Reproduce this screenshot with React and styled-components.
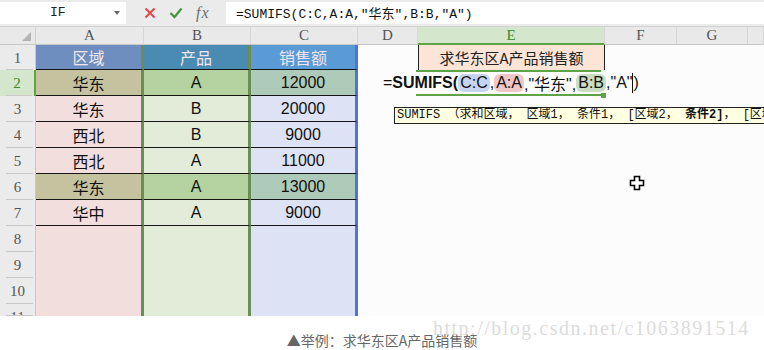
import React from "react";
import styled, { createGlobalStyle } from "styled-components";

const GlobalStyle = createGlobalStyle`
  html, body {
    margin: 0;
    padding: 0;
    background: #ffffff;
  }
  body {
    font-family: "Liberation Sans", "Noto Sans CJK SC", sans-serif;
  }
`;

const columns = [
  { key: "A", edge: "#6b8c55", head: "#6d8ebf", hi: "#c5c39f", lo: "#f2dedd" },
  { key: "B", edge: "#6b8c55", head: "#4a8bb3", hi: "#b4d3a0", lo: "#e2ecd9" },
  { key: "C", edge: "#4f74d4", head: "#5b9bd5", hi: "#aecab8", lo: "#dde3f5" },
];

const heads = ["区域", "产品", "销售额"];

const records = [
  { cells: ["华东", "A", "12000"], hit: true },
  { cells: ["华东", "B", "20000"] },
  { cells: ["西北", "B", "9000"] },
  { cells: ["西北", "A", "11000"] },
  { cells: ["华东", "A", "13000"], hit: true },
  { cells: ["华中", "A", "9000"] },
];

const Page = styled.div`
  width: 764px;
  height: 350px;
  overflow: hidden;
  display: flex;
  flex-direction: column;
  background: #ffffff;
`;

const FormulaBar = styled.div`
  height: 27px;
  box-sizing: border-box;
  display: flex;
  align-items: center;
  padding: 2px 0 3px;
  background: #ebebeb;
  border-bottom: 1px solid #d2d2d2;
`;

const NameBox = styled.div`
  width: 126px;
  height: 22px;
  box-sizing: border-box;
  display: flex;
  align-items: center;
  padding-left: 50px;
  background: #ffffff;
  font-family: "Liberation Mono", monospace;
  font-size: 13px;
  color: #222;
`;

const DropArrow = styled.span`
  margin-left: auto;
  margin-right: 6px;
  width: 0;
  height: 0;
  border-left: 3px solid transparent;
  border-right: 3px solid transparent;
  border-top: 4px solid #666;
`;

const Actions = styled.div`
  width: 100px;
  height: 22px;
  display: flex;
  align-items: center;
  padding-left: 18px;
  gap: 13px;
  box-sizing: border-box;
`;

const Fx = styled.span`
  font-family: "Liberation Serif", serif;
  font-style: italic;
  font-size: 16px;
  color: #6e6e6e;
  letter-spacing: 1px;
`;

const FormulaInput = styled.div`
  flex: 1;
  height: 22px;
  display: flex;
  align-items: center;
  padding-left: 10px;
  background: #ffffff;
  font-family: "Liberation Mono", "Noto Sans CJK SC", monospace;
  font-size: 13px;
  color: #111;
  white-space: nowrap;
`;

const Sheet = styled.div`
  position: relative;
  display: grid;
  grid-template-columns: 36px 108px 107px 107px 60px 187px 72px 71px 1fr;
  grid-template-rows: 18px 25px repeat(9, 26px) 12px;
  height: 289px;
  overflow: hidden;
  background: #fcfcfc;
`;

const Corner = styled.div`
  position: relative;
  background: #e9e9e9;
  border-bottom: 1px solid #c8c8c8;
  border-right: 1px solid #d0d0d0;
  &::after {
    content: "";
    position: absolute;
    right: 4px;
    bottom: 3px;
    border-left: 9px solid transparent;
    border-bottom: 9px solid #b4b4b4;
  }
`;

const ColHead = styled.div`
  display: flex;
  align-items: center;
  justify-content: center;
  box-sizing: border-box;
  background: ${(p) => (p.$active ? "#d4e6cc" : "#e9e9e9")};
  border-bottom: ${(p) => (p.$active ? "2px solid #5ea345" : "1px solid #c8c8c8")};
  border-right: 1px solid #d6d6d6;
  font-family: "Liberation Serif", serif;
  font-size: 15px;
  color: ${(p) => (p.$active ? "#3d8a2c" : "#555")};
`;

const RowHead = styled.div`
  position: relative;
  box-sizing: border-box;
  padding-top: 4px;
  text-align: center;
  line-height: 18px;
  background: ${(p) => (p.$active ? "#d4e6cc" : "#ebebeb")};
  border-right: ${(p) => (p.$active ? "2px solid #5ea345" : "1px solid #c8c8c8")};
  font-family: "Liberation Serif", serif;
  font-size: 15px;
  color: ${(p) => (p.$active ? "#3d8a2c" : "#555")};
  &::after {
    content: "";
    position: absolute;
    left: 6px;
    right: 2px;
    bottom: 0;
    height: 1px;
    background: #c9c9c9;
  }
`;

const DataCell = styled.div`
  position: relative;
  display: flex;
  align-items: center;
  justify-content: center;
  box-sizing: border-box;
  background: ${(p) => p.$bg};
  border-right: 3px solid ${(p) => p.$edge};
  border-bottom: ${(p) => (p.$ruled ? "1.5px solid #151515" : "none")};
  font-size: 16px;
  color: ${(p) => (p.$light ? "#f3e6ee" : "#111")};
`;

const TitleCell = styled.div`
  display: flex;
  align-items: center;
  justify-content: center;
  background: #fce4d6;
  border-left: 1px solid #222;
  border-right: 1px solid #222;
  font-family: "Noto Sans CJK SC", sans-serif;
  font-size: 15px;
  color: #222;
`;

const Blank = styled.div``;

const EditCell = styled.div`
  position: relative;
  z-index: 3;
`;

const ActiveCell = styled.div`
  position: relative;
  box-sizing: border-box;
  border-top: 2px solid #5ea345;
  border-bottom: 2px solid #5ea345;
  margin-left: -2px;
  margin-right: 4px;
  &::after {
    content: "";
    position: absolute;
    right: -5px;
    bottom: -4px;
    width: 5px;
    height: 5px;
    background: #5ea345;
  }
`;

const Editor = styled.div`
  position: absolute;
  left: 25px;
  top: 0;
  height: 26px;
  display: flex;
  align-items: center;
  white-space: nowrap;
  font-size: 16px;
  color: #111;
`;

const Fn = styled.b`
  font-weight: 700;
`;

const Ref = styled.span`
  background: ${(p) => p.$tint};
  border-radius: 6px;
  padding: 0 2px;
  line-height: 18px;
`;

const Caret = styled.span`
  display: inline-block;
  width: 1px;
  height: 20px;
  background: #111;
`;

const Tip = styled.div`
  position: absolute;
  left: 36px;
  top: 37px;
  height: 17px;
  box-sizing: border-box;
  padding: 0 2px;
  white-space: pre;
  background: #ffffe1;
  border: 1px solid #222;
  font-family: "Liberation Mono", "Noto Sans CJK SC", monospace;
  font-size: 12px;
  line-height: 15px;
  color: #111;
`;

const Pointer = styled.svg`
  position: absolute;
  left: 629px;
  top: 148px;
`;

const Footer = styled.div`
  position: relative;
  flex: 1;
  padding-top: 14px;
  text-align: center;
  font-family: "Noto Sans CJK SC", sans-serif;
  font-size: 14px;
  line-height: 20px;
  color: #666;
`;

const Watermark = styled.div`
  position: absolute;
  left: 433px;
  top: 2px;
  font-family: "Liberation Serif", serif;
  font-size: 20px;
  line-height: 20px;
  letter-spacing: 1.5px;
  color: rgba(190, 190, 190, 0.55);
  white-space: nowrap;
`;

function CrossIcon() {
  return (
    <svg width="12" height="12" viewBox="0 0 12 12">
      <path d="M1.5 1.5 L10.5 10.5 M10.5 1.5 L1.5 10.5" stroke="#e0474c" strokeWidth="2" />
    </svg>
  );
}

function CheckIcon() {
  return (
    <svg width="14" height="12" viewBox="0 0 14 12">
      <path d="M1.5 6 L5.5 10 L12.5 1.5" stroke="#3f9a3c" strokeWidth="2.2" fill="none" />
    </svg>
  );
}

function CellPointer() {
  return (
    <Pointer width="16" height="16" viewBox="0 0 16 16">
      <path
        d="M5.5 1.5 H10.5 V5.5 H14.5 V10.5 H10.5 V14.5 H5.5 V10.5 H1.5 V5.5 H5.5 Z"
        fill="#fff"
        stroke="#000"
        strokeWidth="1.6"
      />
    </Pointer>
  );
}

function RightCells({ row }) {
  if (row === 1) {
    return (
      <>
        <Blank />
        <TitleCell>求华东区A产品销售额</TitleCell>
        <Blank />
        <Blank />
        <Blank />
      </>
    );
  }
  if (row === 2) {
    return (
      <>
        <EditCell>
          <Editor>
            =<Fn>SUMIFS(</Fn>
            <Ref $tint="#c6d4ef">C:C</Ref>,<Ref $tint="#f1c6c6">A:A</Ref>,"华东",
            <Ref $tint="#cadcc1">B:B</Ref>,"A"<Caret />)
          </Editor>
          <Tip>
            {"SUMIFS （求和区域， 区域1， 条件1， [区域2， "}
            <b>条件2]</b>
            {"， [区域3， 条件3]， ...）"}
          </Tip>
        </EditCell>
        <ActiveCell />
        <Blank />
        <Blank />
        <Blank />
      </>
    );
  }
  return (
    <>
      <Blank />
      <Blank />
      <Blank />
      <Blank />
      <Blank />
    </>
  );
}

function App() {
  const rows = [];
  for (let r = 1; r <= 11; r++) {
    const rec = records[r - 2];
    rows.push(
      <React.Fragment key={r}>
        <RowHead $active={r === 2}>{r}</RowHead>
        {columns.map((c, i) => {
          if (r === 1) {
            return (
              <DataCell key={c.key} $bg={c.head} $edge={c.edge} $ruled $light>
                {heads[i]}
              </DataCell>
            );
          }
          return (
            <DataCell
              key={c.key}
              $bg={rec && rec.hit ? c.hi : c.lo}
              $edge={c.edge}
              $ruled={!!rec}
            >
              {rec ? rec.cells[i] : ""}
            </DataCell>
          );
        })}
        <RightCells row={r} />
      </React.Fragment>
    );
  }

  return (
    <Page>
      <GlobalStyle />
      <FormulaBar>
        <NameBox>
          IF
          <DropArrow />
        </NameBox>
        <Actions>
          <CrossIcon />
          <CheckIcon />
          <Fx>fx</Fx>
        </Actions>
        <FormulaInput>=SUMIFS(C:C,A:A,"华东",B:B,"A")</FormulaInput>
      </FormulaBar>
      <Sheet>
        <Corner />
        {["A", "B", "C", "D", "E", "F", "G"].map((k) => (
          <ColHead key={k} $active={k === "E"}>
            {k}
          </ColHead>
        ))}
        <ColHead />
        {rows}
        <CellPointer />
      </Sheet>
      <Footer>
        ▲举例：求华东区A产品销售额
        <Watermark>http://blog.csdn.net/c1063891514</Watermark>
      </Footer>
    </Page>
  );
}

export default App;
